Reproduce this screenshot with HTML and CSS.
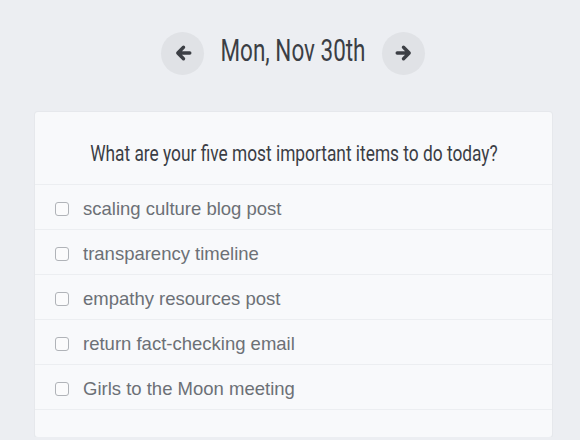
FILE: index.html
```html
<!DOCTYPE html>
<html>
<head>
<meta charset="utf-8">
<link rel="stylesheet" href="styles.css">
</head>
<body>
<div class="page">
  <div class="datebar">
    <button class="nav-btn" aria-label="Previous day">
      <svg width="18" height="18" viewBox="0 0 18 18"><path d="M15.8 9H4.5M9.5 3.3L3.8 9l5.7 5.7" fill="none" stroke="#3c3f45" stroke-width="3.4" stroke-linecap="round" stroke-linejoin="round"/></svg>
    </button>
    <h1 class="date"><span class="squeeze">Mon, Nov 30th</span></h1>
    <button class="nav-btn" aria-label="Next day">
      <svg width="18" height="18" viewBox="0 0 18 18"><path d="M2.2 9h11.3M8.5 3.3L14.2 9l-5.7 5.7" fill="none" stroke="#3c3f45" stroke-width="3.4" stroke-linecap="round" stroke-linejoin="round"/></svg>
    </button>
  </div>
  <div class="card">
    <h2 class="question"><span class="squeeze-q">What are your five most important items to do today?</span></h2>
    <ul class="items">
      <li class="item"><span class="box"></span><span class="label">scaling culture blog post</span></li>
      <li class="item"><span class="box"></span><span class="label">transparency timeline</span></li>
      <li class="item"><span class="box"></span><span class="label">empathy resources post</span></li>
      <li class="item"><span class="box"></span><span class="label">return fact-checking email</span></li>
      <li class="item"><span class="box"></span><span class="label">Girls to the Moon meeting</span></li>
      <li class="item empty"></li>
    </ul>
  </div>
</div>
</body>
</html>
```
FILE: styles.css
```css
html, body {
  margin: 0;
  padding: 0;
  background: #eceef2;
}
.page {
  padding-top: 31px;
}
.datebar {
  display: flex;
  justify-content: center;
  align-items: center;
  gap: 17px;
  height: 44px;
  margin-left: 6px;
}
.nav-btn {
  width: 43px;
  height: 43px;
  border-radius: 50%;
  border: none;
  background: #e0e2e6;
  display: flex;
  align-items: center;
  justify-content: center;
  padding: 0;
}
.date {
  margin: 0 0 4px 0;
  width: 144px;
  display: flex;
  justify-content: center;
  font-family: Roboto, sans-serif;
  font-weight: 400;
  font-size: 31px;
  line-height: 36px;
  color: #3b3e45;
  white-space: nowrap;
}
.squeeze {
  display: inline-block;
  transform: scaleX(0.725);
}
.card {
  margin: 37px 28px 0 35px;
  background: #f8f9fb;
  border-radius: 3px;
  box-shadow: 0 0 0 1px #e6e8ec, 0 1px 2px rgba(0,0,0,0.06);
}
.question {
  margin: 0;
  height: 73px;
  padding-top: 10px;
  display: flex;
  align-items: center;
  justify-content: center;
  font-family: Roboto, sans-serif;
  font-weight: 400;
  font-size: 22px;
  color: #3b3e45;
  border-bottom: 1px solid #eceef1;
  box-sizing: border-box;
  white-space: nowrap;
}
.squeeze-q {
  display: inline-block;
  transform: scaleX(0.787);
}
.items {
  list-style: none;
  margin: 0;
  padding: 0;
}
.item {
  height: 45px;
  display: flex;
  align-items: center;
  border-bottom: 1px solid #eceef1;
  box-sizing: border-box;
  padding-left: 20px;
  padding-top: 3px;
}
.item.empty {
  height: 27px;
  border-bottom: none;
}
.box {
  width: 12px;
  height: 12px;
  border: 1px solid #b0b3b8;
  border-radius: 3px;
  background: #fbfbfc;
  margin-right: 14px;
}
.label {
  font-family: "Liberation Sans", Arial, sans-serif;
  font-size: 18.5px;
  color: #6c7076;
}
```
